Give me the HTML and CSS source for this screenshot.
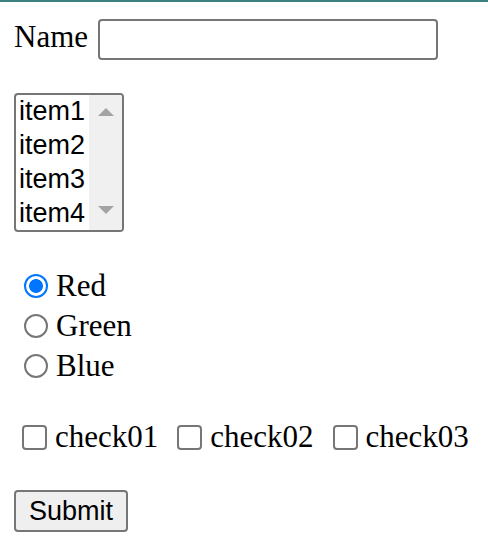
FILE: index.html
```html
<!DOCTYPE html>
<html lang="en">
<head>
<meta charset="utf-8">
<title>Form</title>
<link rel="stylesheet" href="styles.css">
</head>
<body>
<form class="form">
  <div class="name-row">
    <label class="name-label" for="name">Name</label>
    <input class="text-input" id="name" type="text">
  </div>

  <div class="listbox" role="listbox">
    <ul class="listbox-items">
      <li class="listbox-item">item1</li>
      <li class="listbox-item">item2</li>
      <li class="listbox-item">item3</li>
      <li class="listbox-item">item4</li>
    </ul>
    <div class="scrollbar">
      <span class="arrow arrow-up"></span>
      <span class="arrow arrow-down"></span>
    </div>
  </div>

  <div class="radios">
    <label class="radio-row"><input class="radio" type="radio" name="color" checked><span>Red</span></label>
    <label class="radio-row"><input class="radio" type="radio" name="color"><span>Green</span></label>
    <label class="radio-row"><input class="radio" type="radio" name="color"><span>Blue</span></label>
  </div>

  <div class="checks">
    <label class="check-item"><input class="check" type="checkbox"><span>check01</span></label>
    <label class="check-item"><input class="check" type="checkbox"><span>check02</span></label>
    <label class="check-item"><input class="check" type="checkbox"><span>check03</span></label>
  </div>

  <button class="submit" type="button">Submit</button>
</form>
</body>
</html>
```

FILE: styles.css
```css
html, body {
  margin: 0;
  padding: 0;
  background: #ffffff;
}

body {
  border-top: 2px solid #3d8082;
  font-family: "Liberation Serif", "Times New Roman", serif;
  font-size: 31px;
  color: #000000;
}

.form {
  padding: 17px 14px 0 14px;
  display: flex;
  flex-direction: column;
  align-items: flex-start;
}

.name-row {
  display: flex;
  align-items: flex-start;
  gap: 10px;
  height: 41px;
}

.name-label {
  line-height: 35px;
}

.text-input {
  box-sizing: border-box;
  width: 340px;
  height: 41px;
  margin: 0;
  border: 2px solid #767676;
  border-radius: 4px;
  background: #ffffff;
  padding: 0 4px;
  font: 24px "Liberation Sans", Arial, sans-serif;
}

.listbox {
  box-sizing: border-box;
  margin-top: 33px;
  width: 110px;
  height: 139px;
  border: 2px solid #767676;
  border-radius: 4px;
  display: flex;
  overflow: hidden;
  background: #ffffff;
}

.listbox-items {
  list-style: none;
  margin: -1px 0 0 0;
  padding: 0 0 0 3px;
  flex: 1;
  font: 27px "Liberation Sans", Arial, sans-serif;
  line-height: 34px;
}

.scrollbar {
  width: 33px;
  background: #f0f0f0;
  display: flex;
  flex-direction: column;
  justify-content: space-between;
  align-items: center;
  padding: 13px 0 16px;
}

.arrow {
  width: 0;
  height: 0;
  border-left: 8px solid transparent;
  border-right: 8px solid transparent;
}

.arrow-up {
  border-bottom: 8px solid #a3a3a3;
}

.arrow-down {
  border-top: 8px solid #a3a3a3;
}

.radios {
  margin-top: 34px;
  display: flex;
  flex-direction: column;
}

.radio-row {
  display: flex;
  align-items: center;
  height: 40px;
  line-height: 40px;
  gap: 8px;
}

.radio {
  appearance: none;
  -webkit-appearance: none;
  box-sizing: border-box;
  width: 24px;
  height: 24px;
  margin: 0 0 0 10px;
  border: 2px solid #767676;
  border-radius: 50%;
  background: #ffffff;
}

.radio:checked {
  border: 2.5px solid #0075ff;
  background: radial-gradient(circle, #0075ff 0 6.5px, #ffffff 7.3px);
}

.checks {
  margin-top: 31px;
  display: flex;
  height: 40px;
  line-height: 40px;
  gap: 11px;
}

.check-item {
  display: flex;
  align-items: center;
  gap: 8px;
}

.check {
  appearance: none;
  -webkit-appearance: none;
  box-sizing: border-box;
  width: 25px;
  height: 25px;
  margin: 0 0 0 8px;
  border: 2px solid #767676;
  border-radius: 4px;
  background: #ffffff;
}

.submit {
  margin-top: 33px;
  box-sizing: border-box;
  width: 114px;
  height: 42px;
  border: 2px solid #767676;
  border-radius: 4px;
  background: #efefef;
  font: 27px "Liberation Sans", Arial, sans-serif;
  color: #000000;
  padding: 0;
}
```
